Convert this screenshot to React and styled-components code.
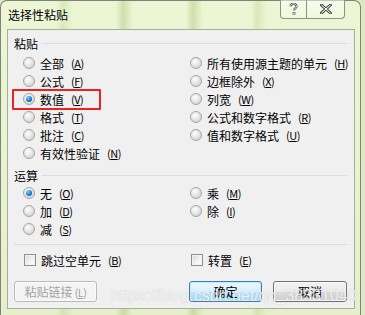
import styled, { createGlobalStyle } from 'styled-components';

const GlobalStyle = createGlobalStyle`
  html, body {
    margin: 0;
    padding: 0;
    background: #e9f2cf;
    font-family: "Noto Sans CJK SC", "DejaVu Sans", sans-serif;
  }
`

const Screen = styled.div`
  width: 365px;
  height: 315px;
  overflow: hidden;
  background: #dfe8c4;
`

const Window = styled.div`
  position: relative;
  width: 361px;
  height: 315px;
  box-sizing: border-box;
  border: 1px solid #7d8477;
  border-bottom: none;
  border-radius: 7px 7px 0 0;
  background:
    linear-gradient(90deg, transparent 55px, rgba(160, 190, 110, 0.25) 62px, transparent 72px,
      transparent 115px, rgba(150, 180, 100, 0.35) 122px, transparent 132px,
      transparent 185px, rgba(150, 180, 100, 0.35) 192px, transparent 202px,
      transparent 250px, rgba(160, 190, 110, 0.25) 256px, transparent 266px),
    linear-gradient(180deg, #edf6d4 0%, #eaf4d0 40%, #e6efc9 100%);
  display: flex;
  flex-direction: column;
`

const TitleBar = styled.div`
  height: 28px;
  display: flex;
  align-items: flex-start;
  justify-content: space-between;
`

const Title = styled.div`
  font-size: 12px;
  line-height: 12px;
  margin: 8px 0 0 7px;
  color: #000;
  text-shadow: 0 0 6px rgba(255, 255, 255, 0.9);
`

const CaptionButtons = styled.div`
  display: flex;
  margin-right: 15px;
  margin-top: -1px;
`

const CaptionButton = styled.div`
  width: ${p => p.$w}px;
  height: 19px;
  box-sizing: border-box;
  border: 1px solid #8c9386;
  border-top: none;
  border-left: ${p => (p.$first ? '1px solid #8c9386' : 'none')};
  border-radius: ${p => (p.$first ? '0 0 0 4px' : '0 0 4px 0')};
  background: linear-gradient(180deg, rgba(255,255,255,0.55), rgba(255,255,255,0.25));
  display: flex;
  align-items: center;
  justify-content: center;
`

const Panel = styled.div`
  margin: 0 5px 0 6px;
  height: 280px;
  box-sizing: border-box;
  border: 1px solid #a8ae9e;
  background: #f0f0f0;
  padding: 3px 7px 0 6px;
  display: flex;
  flex-direction: column;
`

const GroupHeader = styled.div`
  display: flex;
  align-items: center;
  gap: 4px;
  height: 18px;
  font-size: 12px;
  color: #000;
  margin-top: ${p => p.$top || 0}px;
`

const Line = styled.div`
  flex: 1;
  height: 1px;
  background: #d5dfe5;
`

const Grid = styled.div`
  display: grid;
  grid-template-columns: 167px 1fr;
  grid-auto-flow: column;
  grid-template-rows: repeat(${p => p.$rows}, 18px);
  padding-left: 9px;
  margin-top: ${p => p.$top || 0}px;
`

const Option = styled.label`
  display: flex;
  align-items: center;
  gap: 5px;
  height: 18px;
  font-size: 12px;
  color: #000;
  white-space: nowrap;
  position: relative;
`

const Radio = styled.span`
  width: 12px;
  height: 12px;
  box-sizing: border-box;
  border-radius: 50%;
  border: 1px solid #a6a6a6;
  background: radial-gradient(circle at 40% 35%, #ffffff 0%, #e6e6e6 45%, #c8c8c8 100%);
  display: flex;
  align-items: center;
  justify-content: center;
  flex-shrink: 0;
  &::after {
    content: '';
    display: ${p => (p.$checked ? 'block' : 'none')};
    width: 6px;
    height: 6px;
    border-radius: 50%;
    background: radial-gradient(circle at 35% 30%, #8fd6ff 0%, #1f8ad8 45%, #0b4f86 100%);
  }
`

const Check = styled.span`
  width: 12px;
  height: 12px;
  box-sizing: border-box;
  border: 1px solid #8e8f8f;
  background: linear-gradient(135deg, #d8d8d8 0%, #f4f4f4 60%, #ffffff 100%);
  box-shadow: inset 0 0 0 1px #f2f2f2;
  flex-shrink: 0;
`

const Key = styled.span`
  font-size: 11px;
  margin-left: 2px;
  letter-spacing: -0.5px;
  & u {
    text-decoration: underline;
    text-underline-offset: 1px;
  }
`

const Highlight = styled.span`
  position: absolute;
  left: -11px;
  top: -1px;
  width: 85px;
  height: 17px;
  border: 2px solid #e8241c;
  border-radius: 1px;
`

const Separator = styled.div`
  height: 1px;
  background: #d5dfe5;
  margin: 6px 0 6px 0;
`

const CheckRow = styled.div`
  display: grid;
  grid-template-columns: 167px 1fr;
  padding-left: 10px;
`

const Buttons = styled.div`
  display: flex;
  align-items: center;
  margin-top: 12px;
`

const Button = styled.div`
  width: ${p => p.$w}px;
  height: 21px;
  box-sizing: border-box;
  margin-left: ${p => p.$ml || 0}px;
  border-radius: 3px;
  font-size: 12px;
  display: flex;
  align-items: center;
  justify-content: center;
  color: ${p => (p.$disabled ? '#a3a3a3' : '#000')};
  border: 1px solid ${p => (p.$disabled ? '#b7bcbf' : p.$default ? '#3c7fb1' : '#707070')};
  background: ${p =>
    p.$disabled
      ? '#f4f4f4'
      : p.$default
        ? 'linear-gradient(180deg, #eaf6fd 0%, #d9f0fc 50%, #bee6fd 51%, #a7d9f5 100%)'
        : 'linear-gradient(180deg, #f2f2f2 0%, #ebebeb 50%, #dddddd 51%, #cfcfcf 100%)'};
  box-shadow: ${p => (p.$default ? 'inset 0 0 0 1px #c7e7fb' : 'inset 0 0 0 1px #fbfbfb')};
`

const Watermark = styled.div`
  position: absolute;
  left: 110px;
  top: 286px;
  font-family: "Liberation Sans", Arial, sans-serif;
  font-size: 16px;
  color: rgba(255, 255, 255, 0.8);
  text-shadow: 0 0 1px rgba(140, 140, 140, 0.5);
  white-space: nowrap;
  pointer-events: none;
`

const K = ({ c }) => (
  <Key>(<u>{c}</u>)</Key>
)

const paste = [
  ['全部', 'A'],
  ['公式', 'F'],
  ['数值', 'V', true],
  ['格式', 'T'],
  ['批注', 'C'],
  ['有效性验证', 'N'],
  ['所有使用源主题的单元', 'H'],
  ['边框除外', 'X'],
  ['列宽', 'W'],
  ['公式和数字格式', 'R'],
  ['值和数字格式', 'U'],
]

const ops = [
  ['无', 'O', true],
  ['加', 'D'],
  ['减', 'S'],
  ['乘', 'M'],
  ['除', 'I'],
]

export default function App() {
  return (
    <>
      <GlobalStyle />
      <Screen>
        <Window>
          <TitleBar>
            <Title>选择性粘贴</Title>
            <CaptionButtons>
              <CaptionButton $w={27} $first>
                <svg width="9" height="12" viewBox="0 0 9 12">
                  <path d="M1.5 3.5 C1.5 1.5 3 0.8 4.5 0.8 C6.3 0.8 7.5 2 7.5 3.4 C7.5 5.2 5 5.4 5 7.5" fill="none" stroke="#555" strokeWidth="2.2" />
                  <path d="M1.5 3.5 C1.5 1.5 3 0.8 4.5 0.8 C6.3 0.8 7.5 2 7.5 3.4 C7.5 5.2 5 5.4 5 7.5" fill="none" stroke="#fff" strokeWidth="0.8" />
                  <rect x="3.6" y="9" width="2.8" height="2.6" fill="#555" />
                  <rect x="4.3" y="9.6" width="1.4" height="1.4" fill="#fff" />
                </svg>
              </CaptionButton>
              <CaptionButton $w={38}>
                <svg width="12" height="10" viewBox="0 0 12 10">
                  <path d="M1.5 1 L10.5 9 M10.5 1 L1.5 9" stroke="#555" strokeWidth="3" strokeLinecap="square" />
                  <path d="M1.5 1 L10.5 9 M10.5 1 L1.5 9" stroke="#fff" strokeWidth="1" />
                </svg>
              </CaptionButton>
            </CaptionButtons>
          </TitleBar>
          <Panel>
            <GroupHeader $top={1}>
              粘贴
              <Line />
            </GroupHeader>
            <Grid $rows={6} $top={2}>
              {paste.map(([t, k, on]) => (
                <Option key={t}>
                  <Radio $checked={on} />
                  {t}
                  <K c={k} />
                  {on && <Highlight />}
                </Option>
              ))}
            </Grid>
            <GroupHeader $top={4}>
              运算
              <Line />
            </GroupHeader>
            <Grid $rows={3} $top={0}>
              {ops.map(([t, k, on]) => (
                <Option key={t}>
                  <Radio $checked={on} />
                  {t}
                  <K c={k} />
                </Option>
              ))}
            </Grid>
            <Separator />
            <CheckRow>
              <Option>
                <Check />
                跳过空单元
                <K c="B" />
              </Option>
              <Option>
                <Check />
                转置
                <K c="E" />
              </Option>
            </CheckRow>
            <Buttons>
              <Button $w={83} $disabled>
                粘贴链接<K c="L" />
              </Button>
              <Button $w={73} $ml={92} $default>确定</Button>
              <Button $w={74} $ml={11}>取消</Button>
            </Buttons>
          </Panel>
          <Watermark>https://blog.csdn.net/qq_38331040</Watermark>
        </Window>
      </Screen>
    </>
  )
}
